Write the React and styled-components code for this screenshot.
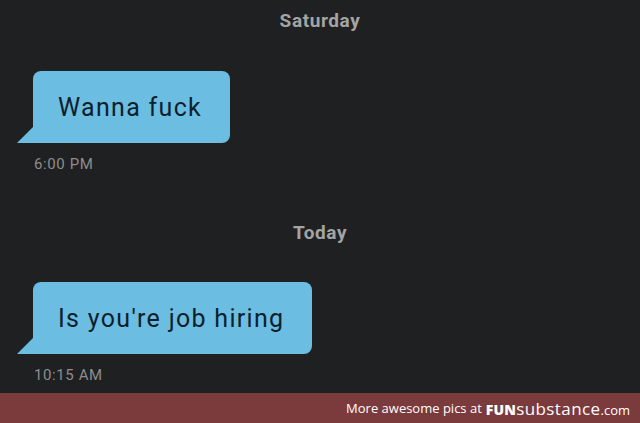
import React from "react";
import styled, { createGlobalStyle } from "styled-components";

const GlobalStyle = createGlobalStyle`
  html, body {
    margin: 0;
    padding: 0;
    background: #1f2022;
  }
  #root {
    width: 640px;
    height: 423px;
    overflow: hidden;
  }
`;

const Screen = styled.div`
  width: 640px;
  height: 423px;
  display: flex;
  flex-direction: column;
  background: #1f2022;
  font-family: Roboto, "Liberation Sans", sans-serif;
`;

const Thread = styled.div`
  flex: 1;
  display: flex;
  flex-direction: column;
  padding-top: 10px;
`;

const DayLabel = styled.div`
  text-align: center;
  color: #a4a4a4;
  font-weight: 700;
  font-size: 19px;
  line-height: 22px;
  letter-spacing: 0.6px;
  margin-top: ${p => p.gap || 0}px;
`;

const Message = styled.div`
  display: flex;
  flex-direction: column;
  align-items: flex-start;
  padding-left: 33px;
  margin-top: ${p => p.gap}px;
`;

const Bubble = styled.div`
  position: relative;
  background: #6cbde2;
  color: #0e1f2b;
  font-size: 25px;
  line-height: 74px;
  height: 72px;
  padding: 0 28px 0 25px;
  border-radius: 8px;
  border-bottom-left-radius: 0;
  letter-spacing: 1.3px;

  &::before {
    content: "";
    position: absolute;
    left: -16px;
    bottom: 0;
    width: 0;
    height: 0;
    border-bottom: 16px solid #6cbde2;
    border-left: 16px solid transparent;
  }
`;

const Stamp = styled.div`
  color: #8d8d8d;
  font-size: 15px;
  line-height: 18px;
  letter-spacing: 0.6px;
  margin-top: 12px;
  padding-left: 1px;
`;

const Footer = styled.div`
  height: 30px;
  background: #7b3a3c;
  display: flex;
  align-items: center;
  justify-content: flex-end;
  padding-right: 10px;
  color: #ffffff;
  font-family: "Open Sans", "Liberation Sans", sans-serif;
  font-size: 13px;
  white-space: nowrap;
`;

const Brand = styled.span`
  margin-left: 4px;
  font-size: 17px;
  letter-spacing: 0.4px;
`;

const Fun = styled.b`
  font-weight: 800;
  font-size: 14px;
  letter-spacing: 0.2px;
`;

const Dom = styled.span`
  font-size: 13px;
  letter-spacing: 0;
`;

export default function App() {
  return (
    <>
      <GlobalStyle />
      <Screen>
        <Thread>
          <DayLabel>Saturday</DayLabel>
          <Message gap={39}>
            <Bubble>Wanna fuck</Bubble>
            <Stamp>6:00 PM</Stamp>
          </Message>
          <DayLabel gap={49}>Today</DayLabel>
          <Message gap={38}>
            <Bubble>Is you're job hiring</Bubble>
            <Stamp>10:15 AM</Stamp>
          </Message>
        </Thread>
        <Footer>
          More awesome pics at
          <Brand>
            <Fun>FUN</Fun>substance<Dom>.com</Dom>
          </Brand>
        </Footer>
      </Screen>
    </>
  );
}
